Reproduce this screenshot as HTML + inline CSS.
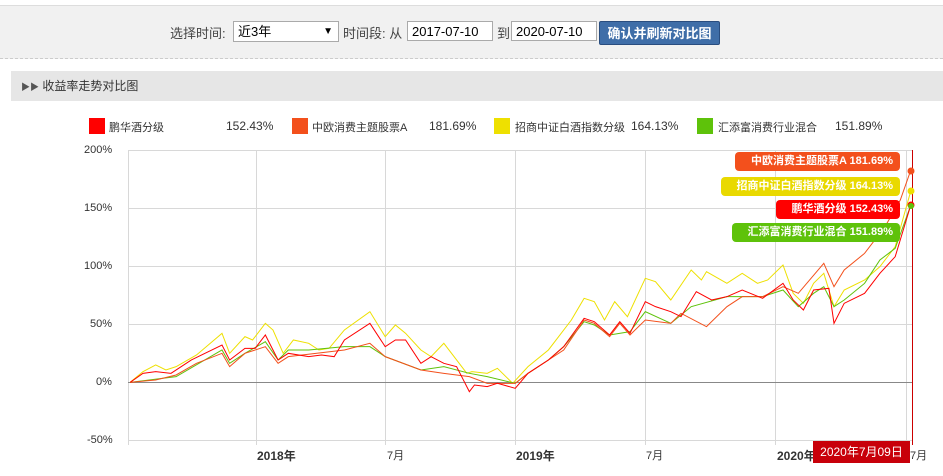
<!DOCTYPE html>
<html><head><meta charset="utf-8"><style>
body{margin:0;width:943px;height:476px;overflow:hidden;background:#fff;font-family:"Liberation Sans","Noto Sans CJK SC",sans-serif;font-size:12px;color:#333;position:relative}
.a{position:absolute}
.top{left:0;top:5px;width:943px;height:52px;background:#f1f1f1;border-top:1px solid #ddd;border-bottom:1px dashed #ccc}
.inp{background:#fff;border:1px solid #aaa;height:20px;line-height:20px;font-size:13px;padding-left:4px;box-sizing:border-box;color:#000}
.btn{left:599px;top:21px;width:121px;height:24px;background:#3f6ea8;border:1px solid #294d7f;color:#fff;font-size:13px;line-height:24px;text-align:center;font-weight:bold;box-sizing:border-box;border-radius:2px}
.hdr{left:11px;top:71px;width:932px;height:30px;background:#e6e6e6;line-height:30px;font-size:12px;color:#333}
.sq{width:16px;height:16px}
.lbl{color:#333;font-size:11px}
.tip{color:#fff;font-weight:bold;font-size:11px;height:19px;line-height:19px;border-radius:4px;text-align:right;padding-right:7px;box-sizing:border-box}
.ax{font-size:11px;color:#333}
</style></head><body>
<div class="a top"></div>
<div class="a" style="left:170px;top:23px;font-size:13px;color:#444">选择时间:</div>
<div class="a inp" style="left:233px;top:21px;width:106px;height:21px">近3年<span style="position:absolute;right:5px;font-size:10px">▼</span></div>
<div class="a" style="left:343px;top:23px;font-size:13px;color:#444">时间段: 从</div>
<div class="a inp" style="left:407px;top:21px;width:86px">2017-07-10</div>
<div class="a" style="left:497px;top:23px;font-size:13px;color:#444">到</div>
<div class="a inp" style="left:511px;top:21px;width:86px">2020-07-10</div>
<div class="a btn">确认并刷新对比图</div>
<div class="a hdr"><span style="margin-left:10px;font-size:9px;color:#555">▶▶</span> 收益率走势对比图</div>

<div class="a sq" style="left:89px;top:118px;background:#f00"></div><div class="a lbl" style="left:109px;top:119px">鹏华酒分级</div><div class="a" style="left:226px;top:119px">152.43%</div>
<div class="a sq" style="left:292px;top:118px;background:#f3501c"></div><div class="a lbl" style="left:312px;top:119px">中欧消费主题股票A</div><div class="a" style="left:429px;top:119px">181.69%</div>
<div class="a sq" style="left:494px;top:118px;background:#eee000"></div><div class="a lbl" style="left:515px;top:119px">招商中证白酒指数分级</div><div class="a" style="left:631px;top:119px">164.13%</div>
<div class="a sq" style="left:697px;top:118px;background:#5ec20a"></div><div class="a lbl" style="left:718px;top:119px">汇添富消费行业混合</div><div class="a" style="left:835px;top:119px">151.89%</div>

<svg class="a" style="left:0;top:0" width="943" height="476">
<g stroke="#d8d8d8" stroke-width="1">
<line x1="128" y1="150.5" x2="913" y2="150.5"/><line x1="128" y1="208.5" x2="913" y2="208.5"/><line x1="128" y1="266.5" x2="913" y2="266.5"/><line x1="128" y1="324.5" x2="913" y2="324.5"/><line x1="128" y1="440.5" x2="913" y2="440.5"/>
<line x1="128.5" y1="150" x2="128.5" y2="445"/><line x1="256.5" y1="150" x2="256.5" y2="445"/><line x1="385.5" y1="150" x2="385.5" y2="445"/><line x1="515.5" y1="150" x2="515.5" y2="445"/><line x1="645.5" y1="150" x2="645.5" y2="445"/><line x1="775.5" y1="150" x2="775.5" y2="445"/><line x1="906.5" y1="150" x2="906.5" y2="445"/>
</g>
<line x1="128" y1="382.5" x2="913" y2="382.5" stroke="#888"/>
<g transform="translate(120,240) scale(0.51,0.3333)" fill="none" stroke-width="1" >
<polyline vector-effect="non-scaling-stroke" stroke="#eee000" points="20,427 45,395 70,375 90,390 110,380 150,345 200,280 215,340 245,290 260,300 285,250 300,270 320,340 340,300 370,310 390,330 410,325 440,270 490,215 520,290 540,255 560,280 590,330 610,350 635,310 660,360 680,400 690,395 720,400 740,385 770,430 800,380 840,330 860,290 885,240 910,175 930,185 950,240 970,185 995,230 1030,115 1050,125 1080,180 1120,90 1140,120 1150,95 1190,130 1220,100 1250,130 1270,120 1300,75 1320,160 1340,190 1360,130 1380,100 1400,200 1420,150 1460,120 1490,80 1520,20 1550,-144"/>
<polyline vector-effect="non-scaling-stroke" stroke="#5ec20a" points="20,427 110,410 200,330 215,370 245,340 285,305 310,360 330,330 370,330 440,320 490,320 520,350 590,390 635,380 685,400 720,410 775,430 800,400 840,360 870,320 910,245 930,255 960,285 1000,275 1030,215 1080,250 1120,200 1190,170 1260,170 1300,150 1330,200 1360,160 1380,140 1400,200 1420,180 1460,130 1490,60 1520,25 1550,-102"/>
<polyline vector-effect="non-scaling-stroke" stroke="#f3501c" points="20,427 70,420 110,405 150,370 200,340 215,380 245,340 285,320 310,370 330,350 440,330 490,310 520,350 590,390 635,400 685,410 720,430 775,430 800,400 840,360 870,330 910,240 930,250 960,290 980,250 1000,285 1030,240 1080,250 1100,220 1150,260 1190,200 1220,170 1260,170 1300,140 1330,160 1380,70 1400,140 1420,90 1460,40 1500,-40 1530,-120 1550,-207"/>
<polyline vector-effect="non-scaling-stroke" stroke="#f00" points="20,427 45,400 70,395 100,400 140,360 200,315 215,360 245,325 265,325 285,285 310,360 330,340 370,350 395,345 420,350 440,300 490,250 520,320 540,300 560,300 590,370 610,350 635,370 660,380 685,455 695,435 720,440 740,430 775,445 800,400 840,360 870,320 910,235 930,245 960,285 980,245 1000,280 1030,185 1050,200 1080,215 1100,230 1130,155 1160,180 1190,170 1220,150 1260,175 1300,130 1320,180 1340,210 1360,150 1390,145 1400,250 1420,190 1460,160 1490,100 1520,50 1550,-102"/>
</g>
<line x1="912.5" y1="150" x2="912.5" y2="445" stroke="#c00"/>
<circle cx="911" cy="171" r="3.5" fill="#f3501c"/><circle cx="911" cy="191" r="3.5" fill="#eee000"/><circle cx="911" cy="205" r="3.5" fill="#f00"/><circle cx="911" cy="206" r="3" fill="#5ec20a"/>
</svg>
<div class="a tip" style="left:735px;top:152px;width:165px;background:#f3501c">中欧消费主题股票A 181.69%</div>
<div class="a tip" style="left:721px;top:177px;width:179px;background:#e9d900">招商中证白酒指数分级 164.13%</div>
<div class="a tip" style="left:776px;top:200px;width:124px;background:#f00">鹏华酒分级 152.43%</div>
<div class="a tip" style="left:732px;top:223px;width:168px;background:#5ec20a">汇添富消费行业混合 151.89%</div>

<div class="a ax" style="left:84px;top:144px">200%</div>
<div class="a ax" style="left:84px;top:202px">150%</div>
<div class="a ax" style="left:84px;top:260px">100%</div>
<div class="a ax" style="left:90px;top:318px">50%</div>
<div class="a ax" style="left:96px;top:376px">0%</div>
<div class="a ax" style="left:87px;top:434px">-50%</div>
<div class="a ax" style="left:257px;top:447px;font-weight:bold;font-size:12px">2018年</div>
<div class="a ax" style="left:387px;top:447px">7月</div>
<div class="a ax" style="left:516px;top:447px;font-weight:bold;font-size:12px">2019年</div>
<div class="a ax" style="left:646px;top:447px">7月</div>
<div class="a ax" style="left:777px;top:447px;font-weight:bold;font-size:12px">2020年</div>
<div class="a ax" style="left:910px;top:447px">7月</div>
<div class="a" style="left:813px;top:441px;width:97px;height:22px;background:#c8000a;color:#fff;font-size:12px;line-height:22px;text-align:center">2020年7月09日</div>
</body></html>
